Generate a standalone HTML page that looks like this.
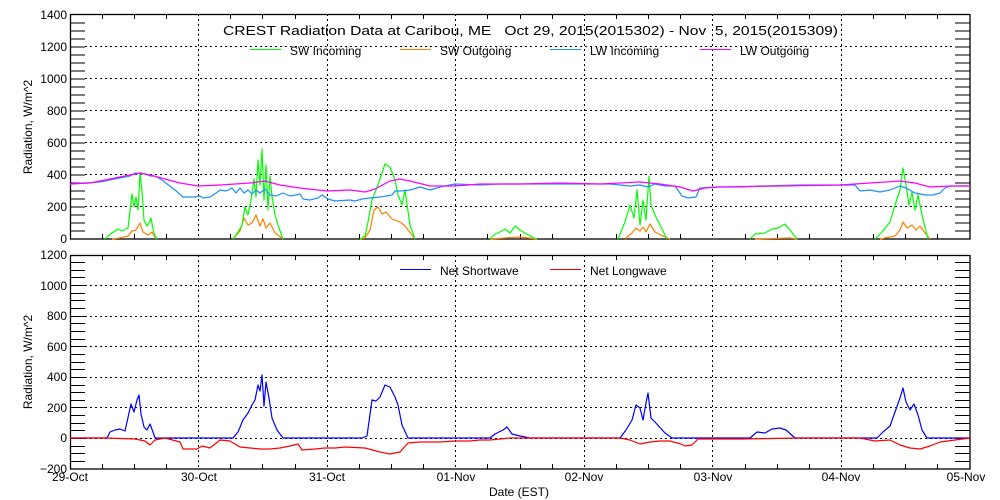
<!DOCTYPE html>
<html><head><meta charset="utf-8"><style>
html,body{margin:0;padding:0;background:#fff;}
svg{display:block;font-family:"Liberation Sans",sans-serif;}
</style></head><body>
<svg width="1000" height="500" viewBox="0 0 1000 500" xmlns="http://www.w3.org/2000/svg">
<rect width="1000" height="500" fill="#fff"/>
<g stroke="#000" stroke-width="1" stroke-dasharray="2,3" fill="none">
<path d="M85 206.5H955M85 174.5H955M85 142.5H955M85 110.5H955M85 78.5H955M85 46.5H955"/>
<path d="M198.5 14V239M327.5 14V239M455.5 14V239M584.5 14V239M712.5 14V239M841.5 14V239"/>
<path d="M85 438.5H955M85 407.5H955M85 377.5H955M85 346.5H955M85 316.5H955M85 285.5H955"/>
<path d="M198.5 255V469M327.5 255V469M455.5 255V469M584.5 255V469M712.5 255V469M841.5 255V469"/>
</g>
<g stroke="#000" stroke-width="1.3" fill="none">
<rect x="70.5" y="14.5" width="899.5" height="224.5"/>
<rect x="70.5" y="255.5" width="899.5" height="213.5"/>
</g>
<g stroke="#000" stroke-width="1" fill="none">
<path d="M70 231h15M70 223h15M70 215h15M70 207h15M70 199h15M70 191h15M70 183h15M70 175h15M70 167h15M70 159h15M70 151h15M70 143h15M70 135h15M70 127h15M70 119h15M70 111h15M70 103h15M70 95h15M70 87h15M70 79h15M70 71h15M70 63h15M70 55h15M70 47h15M70 39h15M70 31h15M70 23h15"/>
<path d="M955 231h15M955 223h15M955 215h15M955 207h15M955 199h15M955 191h15M955 183h15M955 175h15M955 167h15M955 159h15M955 151h15M955 143h15M955 135h15M955 127h15M955 119h15M955 111h15M955 103h15M955 95h15M955 87h15M955 79h15M955 71h15M955 63h15M955 55h15M955 47h15M955 39h15M955 31h15M955 23h15"/>
<path d="M70 461.5h15M70 453.5h15M70 446.5h15M70 438.5h15M70 430.5h15M70 423.5h15M70 415.5h15M70 407.5h15M70 400.5h15M70 392.5h15M70 385.5h15M70 377.5h15M70 369.5h15M70 362.5h15M70 354.5h15M70 346.5h15M70 339.5h15M70 331.5h15M70 323.5h15M70 316.5h15M70 308.5h15M70 300.5h15M70 293.5h15M70 285.5h15M70 277.5h15M70 270.5h15M70 262.5h15"/>
<path d="M955 461.5h15M955 453.5h15M955 446.5h15M955 438.5h15M955 430.5h15M955 423.5h15M955 415.5h15M955 407.5h15M955 400.5h15M955 392.5h15M955 385.5h15M955 377.5h15M955 369.5h15M955 362.5h15M955 354.5h15M955 346.5h15M955 339.5h15M955 331.5h15M955 323.5h15M955 316.5h15M955 308.5h15M955 300.5h15M955 293.5h15M955 285.5h15M955 277.5h15M955 270.5h15M955 262.5h15"/>
<path d="M102.5 239v-5M134.5 239v-5M166.5 239v-5M230.5 239v-5M262.5 239v-5M295.5 239v-5M359.5 239v-5M391.5 239v-5M423.5 239v-5M487.5 239v-5M520.5 239v-5M552.5 239v-5M616.5 239v-5M648.5 239v-5M680.5 239v-5M745.5 239v-5M777.5 239v-5M809.5 239v-5M873.5 239v-5M905.5 239v-5M937.5 239v-5"/>
<path d="M102.5 14v5M134.5 14v5M166.5 14v5M230.5 14v5M262.5 14v5M295.5 14v5M359.5 14v5M391.5 14v5M423.5 14v5M487.5 14v5M520.5 14v5M552.5 14v5M616.5 14v5M648.5 14v5M680.5 14v5M745.5 14v5M777.5 14v5M809.5 14v5M873.5 14v5M905.5 14v5M937.5 14v5"/>
<path d="M102.5 469v-5M134.5 469v-5M166.5 469v-5M230.5 469v-5M262.5 469v-5M295.5 469v-5M359.5 469v-5M391.5 469v-5M423.5 469v-5M487.5 469v-5M520.5 469v-5M552.5 469v-5M616.5 469v-5M648.5 469v-5M680.5 469v-5M745.5 469v-5M777.5 469v-5M809.5 469v-5M873.5 469v-5M905.5 469v-5M937.5 469v-5"/>
<path d="M102.5 255v5M134.5 255v5M166.5 255v5M230.5 255v5M262.5 255v5M295.5 255v5M359.5 255v5M391.5 255v5M423.5 255v5M487.5 255v5M520.5 255v5M552.5 255v5M616.5 255v5M648.5 255v5M680.5 255v5M745.5 255v5M777.5 255v5M809.5 255v5M873.5 255v5M905.5 255v5M937.5 255v5"/>
</g>
<g font-size="12" fill="#000" text-anchor="end">
<text x="67" y="243">0</text><text x="67" y="211">200</text><text x="67" y="179">400</text><text x="67" y="147">600</text><text x="67" y="115">800</text><text x="67" y="83">1000</text><text x="67" y="51">1200</text><text x="67" y="19">1400</text>
<text x="67" y="473">−200</text><text x="67" y="442">0</text><text x="67" y="412">200</text><text x="67" y="381">400</text><text x="67" y="351">600</text><text x="67" y="320">800</text><text x="67" y="290">1000</text><text x="67" y="259">1200</text>
</g>
<g font-size="12" fill="#000" text-anchor="middle">
<text x="70" y="481">29-Oct</text><text x="199" y="481">30-Oct</text><text x="327" y="481">31-Oct</text><text x="456" y="481">01-Nov</text><text x="584" y="481">02-Nov</text><text x="713" y="481">03-Nov</text><text x="841" y="481">04-Nov</text><text x="966" y="481">05-Nov</text>
<text x="519" y="496">Date (EST)</text>
<text transform="translate(32,127) rotate(-90)">Radiation, W/m^2</text>
<text transform="translate(32,362) rotate(-90)">Radiation, W/m^2</text>
</g>
<g font-size="13" fill="#000">
<text x="223" y="35" textLength="615" lengthAdjust="spacingAndGlyphs">CREST Radiation Data at Caribou, ME&#160;&#160;&#160;Oct 29, 2015(2015302) - Nov&#160;&#160;5, 2015(2015309)</text>
</g>
<g font-size="12" fill="#000">
<text x="290" y="55">SW Incoming</text><text x="440" y="55">SW Outgoing</text><text x="590" y="55">LW Incoming</text><text x="740" y="55">LW Outgoing</text>
<text x="440" y="275">Net Shortwave</text><text x="590" y="275">Net Longwave</text>
</g>
<g stroke-width="1" fill="none">
<path d="M250 49.5h31" stroke="#00ff00"/><path d="M400 49.5h31" stroke="#ff7f00"/><path d="M550 49.5h31" stroke="#1e90ff"/><path d="M700 49.5h31" stroke="#ff00ff"/>
<path d="M400 269.5h31" stroke="#0000ff"/><path d="M550 269.5h31" stroke="#ff0000"/>
</g>
<g fill="none" stroke-width="1.2" stroke-linejoin="round">
<path stroke="#ff7f00" d="M112 239L120 238L128 236L132 231L136 230L140 223L143 232L148 235L152 232L156 239M233 239L240 231L244 218L248 225L252 223L256 215L260 226L263 219L266 228L270 223L275 233L283 239M360 239L365 238L370 230L374 210L378 207L382 214L386 212L392 219L400 222L405 226L412 235L415 239M490 239L520 237L537 239M625 239L632 233L636 228L640 231L643 227L646 232L650 224L655 232L665 237L670 239M755 239L790 238L797 239M880 239L895 236L900 230L903 222L907 228L912 225L916 230L920 226L925 233L930 239"/>
<path stroke="#00ff00" d="M105 239L108 236L112 233L118 229L122 231L128 228L132 194L134 207L136 197L138 210L140 173L142 191L144 220L147 226L149 223L151 218L153 229L155 236L157 239M233 239L238 232L242 225L245 207L248 215L251 200L254 179L256 197L258 160L260 185L262 149L264 200L266 165L268 210L270 176L272 196L275 215L279 228L283 239M360 239L365 236L368 222L372 200L378 185L385 164L390 167L395 180L398 195L402 205L405 190L410 225L415 239M490 239L495 234L500 232L505 229L510 233L515 226L520 230L525 233L532 237L537 239M618 239L625 222L630 205L634 218L637 190L640 225L643 200L646 220L649 176L651 205L655 215L660 225L667 239M750 239L755 234L765 233L772 229L778 228L785 224L790 230L797 239M875 239L882 232L890 222L895 205L900 190L903 168L906 185L909 205L912 192L915 210L918 195L922 215L928 239"/>
<path stroke="#1e90ff" d="M70 184L100 182L130 176L135 173L145 174L150 176L155 176L162 180L175 190L183 197L195 197L200 196L203 198L210 197L216 193L220 190L226 191L232 188L236 193L240 188L244 193L248 190L252 194L256 190L260 193L265 189L270 195L276 196L283 193L290 196L296 195L300 194L303 199L310 200L318 198L322 195L328 199L335 201L350 200L355 201L362 199L370 198L380 197L392 195L395 191L400 191L410 190L420 187L430 190L440 187L455 184L480 185L500 184L560 184L610 184L630 186L640 185L648 187L655 184L665 186L675 186L682 196L688 198L696 197L700 188L715 187L740 187L760 186L800 185L855 185L860 191L870 190L880 192L890 190L900 186L906 188L915 193L925 195L933 195L940 193L945 188L950 186L970 186"/>
<path stroke="#ff00ff" d="M70 184L90 183L100 181L115 178L130 175L140 173L150 175L165 179L180 183L198 186L220 185L250 183L265 181L280 185L300 188L327 191L350 190L365 192L375 189L390 181L400 179L410 181L430 186L455 186L480 184L520 184L560 183L600 184L640 182L660 184L680 187L693 191L705 188L720 187L780 186L840 185L870 183L900 181L915 183L930 187L950 186L970 186"/>
</g>
<g fill="none" stroke-width="1.2" stroke-linejoin="round">
<path stroke="#0000ff" d="M70 438L107 438L110 432L115 430L120 429L125 431L131 404L134 412L137 400L139 395L141 414L144 427L147 430L150 424L153 432L155 438L233 438L238 432L243 420L248 413L252 405L255 400L258 385L260 391L262 375L264 406L266 382L269 398L272 418L277 430L283 438L362 438L367 436L372 400L376 401L380 397L385 385L390 387L395 397L398 405L402 425L408 438L490 438L495 434L503 430L507 427L512 434L520 436L530 438L620 438L626 430L632 420L636 405L640 408L643 420L646 403L648 393L651 418L655 422L665 433L672 438L750 438L757 432L765 433L772 429L780 428L786 430L795 438L877 438L883 432L890 426L895 412L900 398L903 388L906 402L910 410L914 404L918 415L922 430L927 438L970 438"/>
<path stroke="#ff0000" d="M70 438L105 438L135 439L145 441L150 445L155 440L165 438L180 442L183 449L197 449L202 446L210 448L220 440L230 441L240 447L260 449L270 449L280 448L290 446L298 444L302 450L315 449L325 448L335 448L345 447L365 448L380 452L390 454L400 452L408 443L420 442L440 442L455 441L470 441L480 440L490 440L500 439L510 438L540 438L620 438L630 440L640 444L650 442L660 441L670 441L681 444L685 446L692 445L698 439L740 439L800 438L860 438L875 441L890 440L900 445L910 448L920 449L930 446L940 442L955 440L970 438"/>
</g>
</svg>
</body></html>
